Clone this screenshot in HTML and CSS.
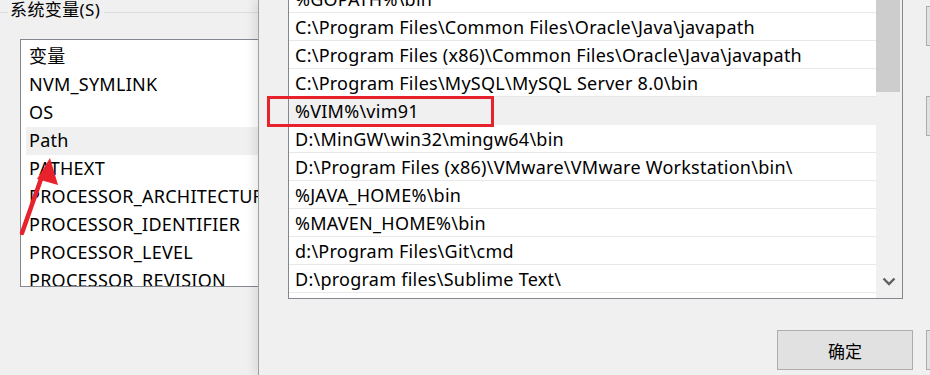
FILE: index.html
```html
<!DOCTYPE html>
<html lang="zh-CN">
<head>
  <meta charset="UTF-8">
  <title>环境变量</title>
  <link rel="stylesheet" href="styles.css">
</head>
<body>

  <div class="screen">

    <!-- background window: system variables -->
    <div class="back">
      <div class="group-title">
        <span class="group-line short"></span>
        <span class="group-label">系统变量(S)</span>
        <span class="group-line"></span>
      </div>
      <div class="var-list">
        <div class="var-row">变量</div>
        <div class="var-row">NVM_SYMLINK</div>
        <div class="var-row">OS</div>
        <div class="var-row selected">Path</div>
        <div class="var-row">PATHEXT</div>
        <div class="var-row">PROCESSOR_ARCHITECTURE</div>
        <div class="var-row">PROCESSOR_IDENTIFIER</div>
        <div class="var-row">PROCESSOR_LEVEL</div>
        <div class="var-row">PROCESSOR_REVISION</div>
      </div>
    </div>

    <!-- front dialog: edit Path -->
    <div class="front">
      <div class="front-main">
        <div class="path-list">
          <div class="path-rows">
            <div class="path-row">%GOPATH%\bin</div>
            <div class="path-row">C:\Program Files\Common Files\Oracle\Java\javapath</div>
            <div class="path-row">C:\Program Files (x86)\Common Files\Oracle\Java\javapath</div>
            <div class="path-row">C:\Program Files\MySQL\MySQL Server 8.0\bin</div>
            <div class="path-row selected">%VIM%\vim91</div>
            <div class="path-row">D:\MinGW\win32\mingw64\bin</div>
            <div class="path-row">D:\Program Files (x86)\VMware\VMware Workstation\bin\</div>
            <div class="path-row">%JAVA_HOME%\bin</div>
            <div class="path-row">%MAVEN_HOME%\bin</div>
            <div class="path-row">d:\Program Files\Git\cmd</div>
            <div class="path-row">D:\program files\Sublime Text\</div>
          </div>
          <div class="scrollbar">
            <div class="thumb"></div>
            <svg class="arrow-down" width="14" height="9" viewBox="0 0 14 9">
              <polyline points="1.5,1.5 7,7 12.5,1.5" fill="none" stroke="#606060" stroke-width="2.4"/>
            </svg>
          </div>
        </div>
        <div class="side-buttons">
          <div class="side-btn"></div>
          <div class="side-btn"></div>
        </div>
      </div>
      <div class="footer">
        <button class="btn">确定</button>
        <button class="btn"></button>
      </div>
    </div>

    <!-- annotations -->
    <div class="mark-box"></div>
    <svg class="mark-arrow" width="60" height="90" viewBox="0 0 60 90">
      <line x1="4" y1="78" x2="23" y2="24" stroke="#e8222c" stroke-width="4.5" stroke-linecap="round"/>
      <polygon points="32,3 40,30 19,24" fill="#e8222c"/>
    </svg>

  </div>

</body>
</html>
```

FILE: styles.css
```css
body {
  margin: 0;
  background-color: #f0f0f0;
  font-family: 'Noto Sans', 'Noto Sans CJK SC', sans-serif;
  font-size: 18px;
  letter-spacing: 0.25px;
  color: #000;
}

.screen {
  position: relative;
  display: flex;
  width: 930px;
  height: 375px;
  overflow: hidden;
}

/* background window */
.back {
  width: 258px;
  flex-shrink: 0;
}

.group-title {
  display: flex;
  align-items: center;
  height: 24px;
}

.group-line {
  flex: 1;
  height: 1px;
  background-color: #dcdcdc;
}

.group-line.short {
  flex: none;
  width: 8px;
}

.group-label {
  padding: 0 4px 0 2px;
  line-height: 24px;
  position: relative;
  top: -2px;
  font-size: 17px;
  letter-spacing: 0.4px;
}

.var-list {
  margin: 15px 0 0 20px;
  height: 243px;
  padding: 3px 0 0 5px;
  background-color: #fff;
  border: 1px solid #828790;
  border-right: none;
  overflow: hidden;
}

.var-row {
  height: 28px;
  line-height: 27px;
  padding-left: 3px;
  white-space: nowrap;
}

.var-row.selected {
  background-color: #f0f0f0;
}

/* front dialog */
.front {
  flex: 1;
  border-left: 1px solid #a0a0a0;
  box-shadow: -5px 0 8px rgba(0, 0, 0, 0.08);
  background-color: #f0f0f0;
  z-index: 1;
}

.front-main {
  display: flex;
  gap: 23px;
  padding-left: 29px;
}

.path-list {
  display: flex;
  width: 613px;
  height: 313px;
  margin-top: -16px;
  background-color: #fff;
  border: 1px solid #828790;
}

.path-rows {
  flex: 1;
  overflow: hidden;
}

.path-row {
  height: 27px;
  line-height: 28px;
  padding-left: 6px;
  border-bottom: 1px solid #e8e8e8;
  white-space: nowrap;
}

.path-row.selected {
  background-color: #f0f0f0;
  border-bottom-color: #f0f0f0;
}

.scrollbar {
  position: relative;
  width: 26px;
  background-color: #f0f0f0;
}

.thumb {
  height: 107px;
  width: 24px;
  background-color: #cdcdcd;
}

.arrow-down {
  position: absolute;
  left: 6px;
  bottom: 12px;
}

.side-buttons {
  display: flex;
  flex-direction: column;
  gap: 50px;
  padding-top: 6px;
}

.side-btn {
  width: 100px;
  height: 38px;
  background-color: #e1e1e1;
  border: 1px solid #adadad;
}

.footer {
  display: flex;
  gap: 13px;
  padding: 31px 0 0 518px;
}

.btn {
  flex-shrink: 0;
  width: 136px;
  height: 40px;
  padding: 0;
  background-color: #e1e1e1;
  border: 1px solid #adadad;
  border-radius: 0;
  font-family: 'Noto Sans CJK SC', sans-serif;
  font-size: 17px;
  color: #000;
}

/* red annotations */
.mark-box {
  position: absolute;
  left: 267px;
  top: 96px;
  width: 221px;
  height: 25px;
  border: 3px solid #e8222c;
  z-index: 2;
}

.mark-arrow {
  position: absolute;
  left: 18px;
  top: 155px;
  z-index: 2;
}
```
